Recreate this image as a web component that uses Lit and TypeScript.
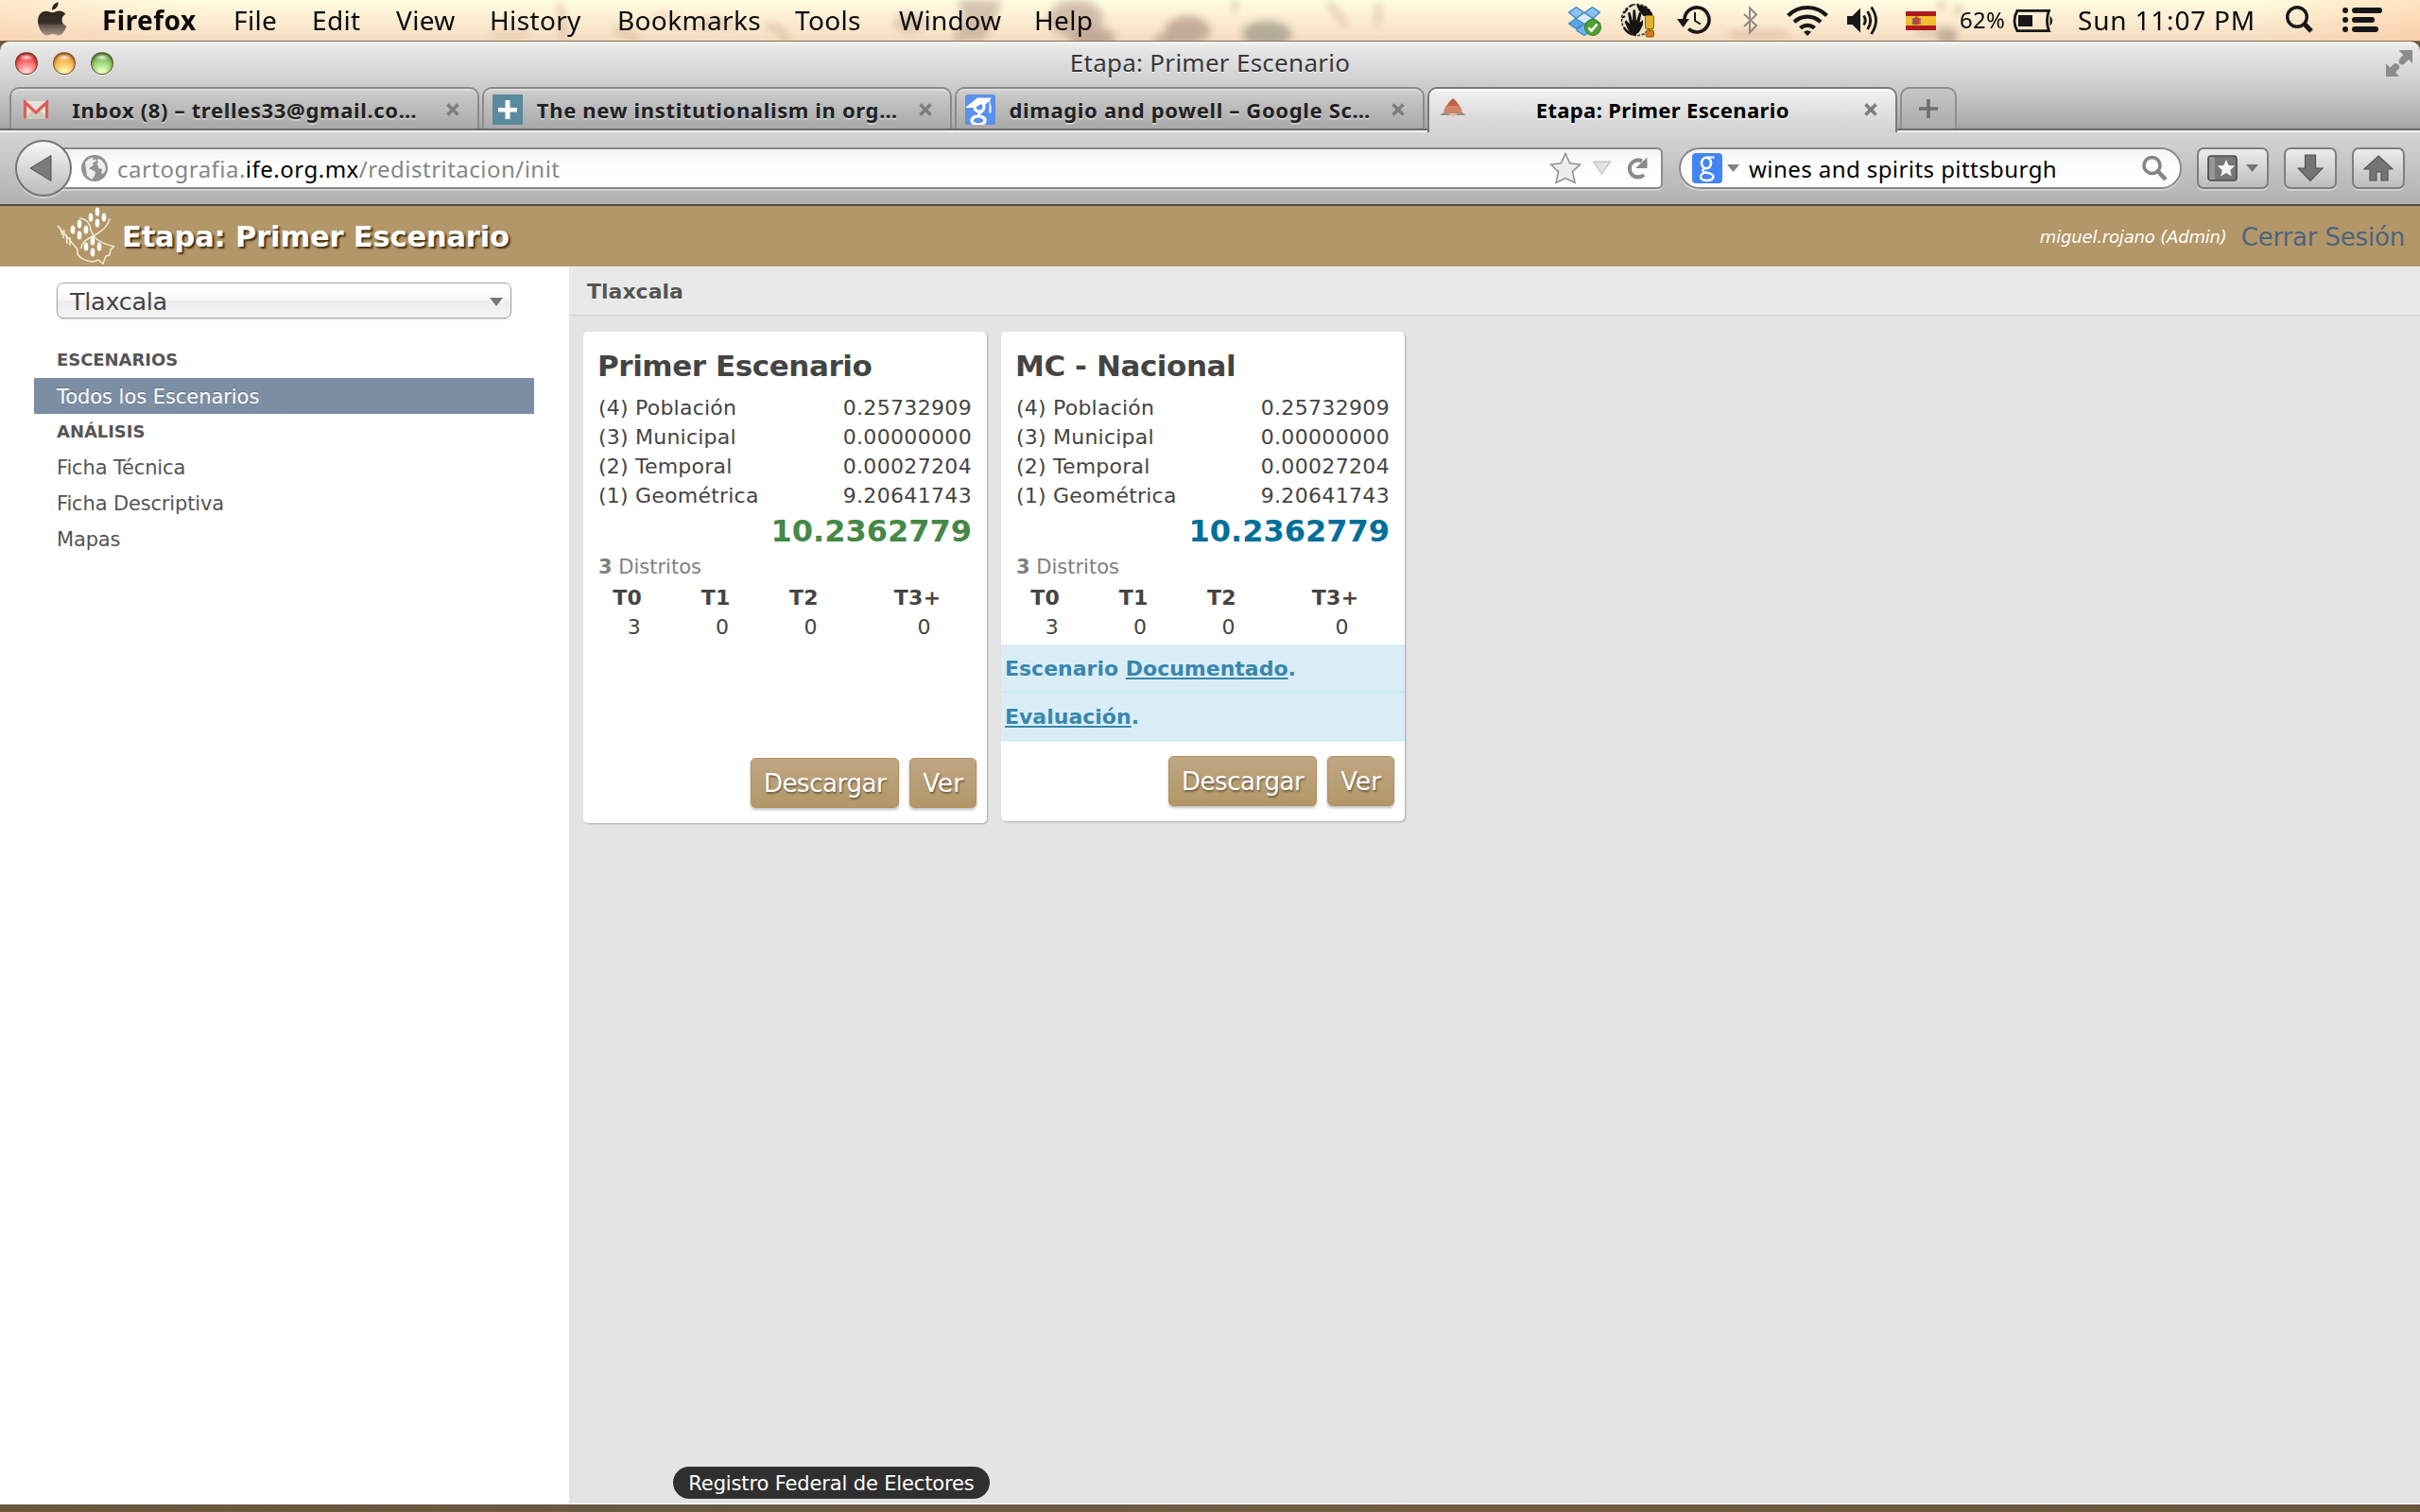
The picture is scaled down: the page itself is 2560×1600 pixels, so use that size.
import { LitElement, html, css, svg, nothing } from "lit";
import { customElement, property } from "lit/decorators.js";
import { classMap } from "lit/directives/class-map.js";

/* ---------- macOS menu bar ---------- */

@customElement("mac-menubar")
class MacMenubar extends LitElement {
  static styles = css`
    :host { display: block; height: 44px; flex: none; }
    .bar {
      display: grid;
      grid-template-columns: 108px 1548px 1fr;
      height: 44px;
      box-sizing: border-box;
      border-bottom: 1px solid #85694c;
      background: linear-gradient(90deg, rgba(255, 200, 160, 0.35), rgba(255, 220, 190, 0) 8%, rgba(255, 220, 190, 0) 93%, rgba(255, 190, 140, 0.4)),
        linear-gradient(#fffde2, #fdeed3 45%, #f3dcc1);
      font: 28px/42px "Noto Sans", sans-serif;
      letter-spacing: 0.35px;
      color: #0a0a0a;
      overflow: hidden;
      position: relative;
    }
    .wallpaper { position: absolute; left: 0; top: 0; }
    .apple, .menus, .status { position: relative; }
    svg { display: block; }
    .menus { display: grid; grid-template-columns: 139px 83px 89px 99px 135px 188px 110px 143px 90px; align-content: start; white-space: nowrap; }
    .app { font-weight: 700; letter-spacing: 0.47px; }
    .status { display: grid; grid-template-columns: 56px 60px 70px 46px 62px 64px 58px 55px 70px 219px 60px 1fr; align-content: start; white-space: nowrap; }
    .percent { font-size: 24px; letter-spacing: 0.3px; padding-left: 1px; }
    .clock { letter-spacing: 0.8px; padding-left: 1px; }
  `;

  private icon(x: number, w: number, body: unknown) {
    return html`<svg width=${w} height="43" viewBox="${x} 0 ${w} 43">${body}</svg>`;
  }

  render() {
    const menus = ["File", "Edit", "View", "History", "Bookmarks", "Tools", "Window", "Help"];
    return html`
      <div class="bar">
        <svg class="wallpaper" width="2560" height="43">
          <defs><filter id="soft" x="-30%" y="-50%" width="160%" height="200%"><feGaussianBlur stdDeviation="4.500" /></filter></defs>
          <g filter="url(#soft)" fill="#a58a7c" opacity=".62">
            <ellipse cx="962" cy="24" rx="17" ry="10" opacity=".55" />
            <path d="M1012 0h48l-8 20 -12 23h-34l14-22z" opacity=".75" />
            <ellipse cx="1138" cy="20" rx="29" ry="20" opacity=".8" />
            <ellipse cx="1156" cy="40" rx="24" ry="11" />
            <ellipse cx="1256" cy="32" rx="24" ry="15" />
            <ellipse cx="1340" cy="36" rx="26" ry="14" fill="#8d8a7d" />
            <ellipse cx="1238" cy="42" rx="18" ry="6" />
            <ellipse cx="2060" cy="38" rx="11" ry="9" />
            <ellipse cx="2040" cy="32" rx="14" ry="6" opacity=".4" />
          </g>
          <g filter="url(#soft)" stroke="#b98b73" fill="none" stroke-width="5" opacity=".5">
            <path d="M1306 0v12M1404 2l20 24M1458 4v22M590 4q10 20 4 38M650 30q20 6 24 13M740 28q14-10 34 0M812 26q18 6 20 18M1830 36h60M2054 0v12M2072 4v12" />
            <path d="M520 36h40M690 18q20-6 30 8" opacity=".6" />
          </g>
        </svg>
        <div class="apple">
          ${this.icon(0, 107, svg`
            <defs><linearGradient id="ap" x1="0" y1="0" x2="0" y2="1"><stop offset="0" stop-color="#2d2620"/><stop offset=".52" stop-color="#3a3029"/><stop offset=".56" stop-color="#5d5048"/><stop offset="1" stop-color="#a69483"/></linearGradient></defs>
            <path fill="#2b2621" d="M55 10.500c-.3-4.500 3-7.800 6.600-8.300 .4 4.200-2.700 8-6.600 8.300z"/>
            <path fill="url(#ap)" d="M55.500 13.200c2.300 0 4.300-1.700 7.500-1.700 2.800 0 4.900 1.300 6.300 3.300-5.500 3.300-4.700 10.700 1 12.900-1.700 4.800-4.700 9.800-8.200 9.800-2.400 0-3.500-1.400-6.400-1.400s-4 1.400-6.300 1.400c-4.300 0-9.400-8.300-9.400-15.200 0-6.800 4.300-10.600 8.600-10.600 3 0 5 1.500 6.900 1.500z"/>`)}
        </div>
        <nav class="menus"><span class="app">Firefox</span>${menus.map((m) => html`<span>${m}</span>`)}</nav>
        <div class="status">
          ${this.icon(1656, 56, svg`
            <g stroke="#3d85c4" stroke-width="1.200" stroke-linejoin="round">
              <path fill="#8ac2ee" d="M1667.500 7.500l8.500 6-9 6-7.500-6.500zM1684.500 7.500l-8.500 6 9 6 7.500-6.500z"/>
              <path fill="#5aa5e4" d="M1667 19.500l-7.500 5.500 8 5.500 8.500-5.500zM1685 19.500l7.500 5.500-8 5.500-8.500-5.500z"/>
              <path fill="#d8ebfa" d="M1676 13.500l9 6-9 6-9-6z"/>
              <path fill="#6fb3ea" d="M1668 31l8-5.500 8 5.500v1.500l-8 5-8-5z"/>
            </g>
            <circle cx="1685" cy="29" r="8.500" fill="#4fa02f" stroke="#2f7a1a"/>
            <path d="M1680.500 29.500l3 3 6-7" fill="none" stroke="#fff" stroke-width="2.600"/>`)}
          ${this.icon(1712, 60, svg`
            <circle cx="1732" cy="21" r="16.500" fill="#ece2c8" stroke="#3a3630" stroke-width="1.600" stroke-dasharray="3 1.500"/>
            <path fill="#151412" d="M1731 5c9 0 16 5 17.500 12h-10l-5-6z"/>
            <path fill="#151412" d="M1718.500 23l2-1.500 3.500 4-2-12 2.500-.5 2.500 9.500.5-12h2.500l1 12 3-9.500 2.500.5-2 10.500 3.500-3v5l-4 8c-5 4-9 3-11-1z"/>
            <path d="M1718 14l4-5M1724 7l3-2M1716 19l3-2" stroke="#151412" stroke-width="2" fill="none"/>
            <path d="M1718 29q4 8 13 7.500" stroke="#151412" stroke-width="2.500" fill="none"/>
            <rect x="1740.500" y="16.500" width="9" height="14" rx="1.500" fill="#dfb22a" stroke="#8d6210"/>
            <rect x="1741" y="32" width="8.500" height="7" rx="1.500" fill="#d17f1b" stroke="#8c4f0e"/>`)}
          ${this.icon(1772, 70, svg`
            <path d="M1782 21.500a13 13 0 1 1 4.200 9" fill="none" stroke="#171717" stroke-width="3.600"/>
            <path d="M1774 20h13l-6.500 9z" fill="#171717"/>
            <path d="M1793 13v9l6 3.500" fill="none" stroke="#171717" stroke-width="2"/>`)}
          ${this.icon(1842, 46, svg`<path d="M1845 15l13 12-7 7.500v-26l7 7-13 12.500" fill="none" stroke="#8f8a82" stroke-width="2"/>`)}
          ${this.icon(1888, 62, svg`
            <g fill="none" stroke="#171717" stroke-width="4.200">
              <path d="M1891.500 16.500a29 29 0 0 1 41 0"/><path d="M1898 23.300a20 20 0 0 1 28 0"/><path d="M1904.500 29.800a11 11 0 0 1 15 0"/>
            </g><path d="M1912 38l-4-4.300a6 6 0 0 1 8 0z" fill="#171717"/>`)}
          ${this.icon(1950, 64, svg`
            <path d="M1954 17h5.500l8.500-8.500v26l-8.500-8.500h-5.500z" fill="#171717"/>
            <g fill="none" stroke="#171717" stroke-width="2.800"><path d="M1971.500 16.500q3.500 5 0 10"/><path d="M1975.500 12q6.500 9.500 0 19"/><path d="M1979.500 7.500q10 14 0 28.500"/></g>`)}
          ${this.icon(2014, 58, svg`
            <rect x="2016" y="12" width="32" height="20" fill="#ad1a1f"/><rect x="2016" y="17" width="32" height="10" fill="#f3bd2b"/>
            <rect x="2024" y="19" width="6.500" height="7" rx="1" fill="#b9443a"/><path d="M2023.500 19v7M2031 19v7" stroke="#77707c" stroke-width="1.400"/><rect x="2026" y="17.500" width="2.600" height="2" fill="#b3541e"/>`)}
          <span class="percent">62%</span>
          ${this.icon(2127, 70, svg`
            <path d="M2134 11.300h33.500q-4 10.700 0 21.400h-33.500q-6-10.700 0-21.400z" fill="none" stroke="#171717" stroke-width="2.800"/>
            <rect x="2135" y="16" width="15" height="12" fill="#171717"/><path d="M2168.500 16.500q5.500 5.500 0 11z" fill="#171717"/>`)}
          <span class="clock">Sun 11:07 PM</span>
          ${this.icon(2416, 60, svg`<circle cx="2430" cy="18" r="10.300" fill="none" stroke="#171717" stroke-width="3.400"/><path d="M2437 24.500l8 8.500" stroke="#171717" stroke-width="5"/>`)}
          ${this.icon(2476, 84, svg`<g stroke="#171717" stroke-width="6" stroke-linecap="round"><path d="M2481 11h.01M2481 21h.01M2481 31h.01M2491 11h26M2491 21h18M2491 31h22"/></g>`)}
        </div>
      </div>`;
  }
}

/* ---------- Firefox window chrome ---------- */

type Tab = { title: string; icon: unknown; active?: boolean };

const TABS: Tab[] = [
  {
    title: "Inbox (8) – trelles33@gmail.co…",
    icon: svg`<rect x="4" y="7" width="26" height="18.500" fill="#e6e3da"/><path d="M4 25.500l9-9h8l9 9z" fill="#cfcbbd"/><path d="M13 16.500L17 13l4 3.500-4 3.500z" fill="#f3f1ea"/><path d="M5.500 25.500V8.500L17 19 28.500 8.500v17" fill="none" stroke="#dd5f56" stroke-width="3.200"/>`,
  },
  {
    title: "The new institutionalism in org…",
    icon: svg`<rect width="32" height="32" fill="#5a8b9c"/><path d="M13.500 6h5v8h7.500v4.500h-7.500V26h-5v-7.500H6V14h7.500z" fill="#fff"/>`,
  },
  {
    title: "dimagio and powell – Google Sc…",
    icon: svg`<rect width="32" height="32" rx="3" fill="#5b90ec"/><path d="M0 14L13 3.500h15l-2.500 3v13l2 0v-7l-1-3V6L20 12l-3-2-7 4z" fill="#fff"/><ellipse cx="15" cy="13" rx="5" ry="5.200" fill="none" stroke="#fff" stroke-width="3.200"/><path d="M18 18q-5 2-2.500 4" stroke="#fff" stroke-width="3" fill="none"/><ellipse cx="14" cy="27.500" rx="7" ry="4.600" fill="none" stroke="#fff" stroke-width="3.400"/>`,
  },
  {
    title: "Etapa: Primer Escenario",
    active: true,
    icon: svg`<path d="M2 22l4-3h20l4 3z" fill="#8f908c"/><path d="M16 4l4 4 4 5 2 5-4 2-6 1-6-1-4-2 2-5 4-5z" fill="#cf8467"/><path d="M16 4l4 4 2 4h-12l2-4z" fill="#bb6542"/><path d="M11 20h10l-5 4z" fill="#e6b9a5"/>`,
  },
];

@customElement("browser-chrome")
class BrowserChrome extends LitElement {
  static styles = css`
    :host { display: block; flex: none; font-family: "Noto Sans", sans-serif; white-space: nowrap; }
    svg { display: block; flex: none; }
    .top {
      background: linear-gradient(#f4f4f4 0, #e9e9e9 4px, #c9c9c9 55%, #adadad 90%, #a0a0a0);
      border-radius: 10px 10px 0 0;
      border-top: 1px solid #fff;
      box-sizing: border-box;
      height: 94px;
    }
    .title { display: grid; grid-template-columns: 200px 1fr 200px; align-items: center; height: 47px; box-sizing: border-box; padding-bottom: 4px; }
    .lights { display: flex; gap: 16px; padding-left: 16px; }
    .light { width: 24px; height: 24px; border-radius: 50%; box-sizing: border-box; border: 1px solid rgba(70, 30, 20, 0.65); box-shadow: 0 1px 1px rgba(255, 255, 255, 0.7), inset 0 2px 3px rgba(60, 10, 0, 0.45); }
    .red { background: radial-gradient(ellipse 9px 4px at 50% 20%, rgba(255, 255, 255, 0.8), transparent), radial-gradient(circle at 50% 95%, #ffd0cd 10%, #f4524e 62%, #c92f2d); }
    .amber { background: radial-gradient(ellipse 9px 4px at 50% 20%, rgba(255, 255, 255, 0.8), transparent), radial-gradient(circle at 50% 95%, #fff3a5 10%, #f4ae48 62%, #cc7b1f); }
    .green { background: radial-gradient(ellipse 9px 4px at 50% 20%, rgba(255, 255, 255, 0.8), transparent), radial-gradient(circle at 50% 95%, #e6ffc0 10%, #82c560 62%, #4a8f36); }
    .name { text-align: center; font-size: 26px; line-height: 36px; padding-bottom: 2px; letter-spacing: 0.27px; color: #383838; text-shadow: 0 1px 0 rgba(255, 255, 255, 0.6); }
    .expand { justify-self: end; padding-right: 7px; }
    .strip { display: flex; height: 46px; box-sizing: border-box; padding-left: 10px; gap: 3.500px; border-bottom: 2px solid #6d6d6d; }
    .tab {
      display: flex; align-items: center; width: 496.500px; height: 44px; box-sizing: border-box; flex: none;
      padding: 2px 19px 0 9px;
      border: 2px solid #8b8b8b; border-bottom: 0; border-radius: 10px 10px 0 0;
      background: linear-gradient(#cfcfcf, #bebebe 40%, #a9a9a9);
      box-shadow: inset 0 2px 1px rgba(255, 255, 255, 0.3);
      color: #222; font-size: 22px; font-weight: 700; letter-spacing: 0.66px;
      text-shadow: 0 2px 0 rgba(255, 255, 255, 0.4);
    }
    .tab.active {
      height: 48px; padding-bottom: 4px; background: linear-gradient(#f2f2f2, #e4e4e4 40%, #d3d3d3); color: #000; letter-spacing: 0.36px;
      box-shadow: inset 0 2px 0 #fff; border-color: #7a7a7a; z-index: 1;
    }
    .label { flex: 1; text-align: center; padding-right: 7px; }
    .new { width: 60px; height: 44px; box-sizing: border-box; border: 2px solid #8f8f8f; border-bottom: 0; border-radius: 10px 10px 0 0; display: flex; justify-content: center; align-items: center; background: linear-gradient(#c6c6c6, #ababab); }
    .tools {
      display: flex; align-items: center; height: 80px; box-sizing: border-box;
      padding: 0 16px 0 16px; border-top: 2px solid #f0f0f0; border-bottom: 2px solid #4c4c4c;
      background: linear-gradient(#d5d5d5, #b1b1b1);
      font-size: 24px;
    }
    .back { width: 60px; height: 60px; border-radius: 50%; box-sizing: border-box; border: 2px solid #757575; background: linear-gradient(#f6f6f6, #bcbcbc); margin-right: -30px; display: grid; place-items: center; z-index: 1; box-shadow: 0 2px 0 rgba(255, 255, 255, 0.4); }
    .field { height: 44px; box-sizing: border-box; border: 2px solid #8a8a8a; display: flex; align-items: center; background: linear-gradient(#f4f4f4, #fdfdfd 40%, #fff); box-shadow: 0 2px 0 rgba(255, 255, 255, 0.35); }
    .url { width: 1713px; border-radius: 0 6px 6px 0; padding: 0 12px 0 38px; color: #868686; letter-spacing: 0.48px; }
    .url b { font-weight: 400; color: #000; letter-spacing: 0.5px; }
    .address { flex: 1; padding-left: 10px; }
    .search { width: 532px; border-radius: 22px; margin: 0 16px 0 17px; padding: 0 13px 0 12px; color: #000; letter-spacing: 0.43px; }
    .query { flex: 1; padding-left: 10px; }
    .btn { width: 56px; height: 44px; box-sizing: border-box; border: 2px solid #7f7f7f; border-radius: 7px; background: linear-gradient(#ececec, #bdbdbd); display: flex; align-items: center; justify-content: center; margin-left: 16px; box-shadow: 0 2px 0 rgba(255, 255, 255, 0.35); }
    .btn.wide { width: 76px; margin-left: 0; gap: 9px; }
    .g { width: 32px; height: 32px; border-radius: 4px; background: #4285f4; margin-right: 5px; flex: none; }
  `;

  render() {
    return html`
      <div class="top">
        <div class="title">
          <div class="lights"><i class="light red"></i><i class="light amber"></i><i class="light green"></i></div>
          <div class="name">Etapa: Primer Escenario</div>
          <svg class="expand" width="30" height="30" viewBox="0 0 30 30"><g fill="#8d8d8d"><path d="M14.500 1H29v14l-4-4-5 5q-3 1-4.500-.500T15 11l4-5z"/><path d="M1 15v14h14l-4-4.500 4-4q1-2.500-.5-4T10 15l-4.500 4.500z"/></g></svg>
        </div>
        <div class="strip">
          ${TABS.map((t) => html`
            <div class=${classMap({ tab: true, active: !!t.active })}>
              <svg width="32" height="32" viewBox="0 0 32 32">${t.icon}</svg>
              <span class="label">${t.title}</span>
              <svg width="14" height="14" viewBox="0 0 14 14"><path d="M1.500 1.500l11 11M12.500 1.500l-11 11" stroke="#7f7f7f" stroke-width="3.600"/></svg>
            </div>`)}
          <div class="new"><svg width="20" height="20" viewBox="0 0 20 20"><path d="M10 0v20M0 10h20" stroke="#6f6f6f" stroke-width="3.600"/></svg></div>
        </div>
      </div>
      <div class="tools">
        <div class="back"><svg width="30" height="30" viewBox="0 0 30 30"><path d="M1 15L23 1.500v27z" fill="#7b7b7b" stroke="#555"/></svg></div>
        <div class="field url">
          <svg width="28" height="28" viewBox="0 0 28 28"><circle cx="14" cy="14" r="14" fill="#929292"/><path fill="#ededed" d="M4 8l4-4 5-1.500-1 3 3-1 1 2-4 2 1 2-4 3-1 3-3 0zM17 4l4 1 4 5 1 6-3 4-2-1 1-4-4-1 0-3-2-1 2-2-1-2zM5 15l5 0 5 3-1 4-3 4-5-4z"/></svg>
          <span class="address">cartografia.<b>ife.org.mx</b>/redistritacion/init</span>
          <svg width="106" height="34" viewBox="0 0 106 34">
            <path d="M17 1.500l4.700 10.300 10.800 1.200-8 7.600 2.600 11.800L17 27.500 7 32.400l2.500-11.800-8-7.600 10.800-1.200z" fill="#ececec" stroke="#8d8d8d" stroke-width="1.500"/>
            <path d="M46.500 10h18L55.500 23.500z" fill="#e2e2e2" stroke="#b4b4b4"/>
            <path d="M100 24a9 9 0 1 1-2-14.500" fill="none" stroke="#8b8b8b" stroke-width="4.200"/><path d="M103.500 5.500v11.500H91z" fill="#8b8b8b"/>
          </svg>
        </div>
        <div class="field search">
          <svg class="g" viewBox="0 0 32 32"><g fill="none" stroke="#fff"><ellipse cx="15" cy="10.500" rx="5" ry="5.800" stroke-width="2.600"/><path d="M15 4.500h8.500" stroke-width="1.800"/><path d="M13 16q-4 3 1 4.500 8 1 8.500 4.500-.5 4-7 4-6.500-.3-6.500-4 .5-3.500 5-4.500" stroke-width="2.300"/></g></svg>
          <svg width="13" height="8" viewBox="0 0 13 8"><path d="M0 0h13L6.500 8z" fill="#808080"/></svg>
          <span class="query">wines and spirits pittsburgh</span>
          <svg width="28" height="28" viewBox="0 0 28 28"><circle cx="11.500" cy="11" r="8.500" fill="none" stroke="#858585" stroke-width="3.600"/><path d="M18 17.500l8 8.500" stroke="#858585" stroke-width="4.600"/></svg>
        </div>
        <div class="btn wide">
          <svg width="32" height="28" viewBox="0 0 32 28"><rect x="1" y="1" width="30" height="26" rx="3" fill="#777" stroke="#4c4c4c" stroke-width="1.600"/><path d="M2 2h6v24H2z" fill="#979797"/><path d="M20 5l2.700 6 6.500.6-5 4.300 1.600 6.600L20 19l-5.800 3.500 1.600-6.600-5-4.300 6.500-.6z" fill="#f5f5f5"/></svg>
          <svg width="13" height="8" viewBox="0 0 13 8"><path d="M0 0h13L6.500 8z" fill="#757575"/></svg>
        </div>
        <div class="btn"><svg width="28" height="30" viewBox="0 0 28 30"><path d="M8.500 1h11v14H27L14 28.500 1 15h7.500z" fill="#757575" stroke="#555" stroke-width="1.200"/></svg></div>
        <div class="btn"><svg width="32" height="28" viewBox="0 0 32 28"><path d="M16 1l15 14h-5v12h-7v-9h-5v9H7V15H1z" fill="#757575" stroke="#555" stroke-width="1.200"/></svg></div>
      </div>`;
  }
}

/* ---------- Scenario card ---------- */

type Scenario = {
  name: string;
  tone: "green" | "blue";
  scores: [string, string][];
  total: string;
  districts: number;
  counts: [string, number][];
  documented: boolean;
};

const SCORES: [string, string][] = [
  ["(4) Población", "0.25732909"],
  ["(3) Municipal", "0.00000000"],
  ["(2) Temporal", "0.00027204"],
  ["(1) Geométrica", "9.20641743"],
];
const COUNTS: [string, number][] = [["T0", 3], ["T1", 0], ["T2", 0], ["T3+", 0]];

const SCENARIOS: Scenario[] = [
  { name: "Primer Escenario", tone: "green", scores: SCORES, total: "10.2362779", districts: 3, counts: COUNTS, documented: false },
  { name: "MC - Nacional", tone: "blue", scores: SCORES, total: "10.2362779", districts: 3, counts: COUNTS, documented: true },
];

@customElement("scenario-card")
class ScenarioCard extends LitElement {
  @property({ attribute: false }) data!: Scenario;

  static styles = css`
    :host { display: block; }
    .card {
      display: flex; flex-direction: column; width: 427px; height: 520px; box-sizing: border-box;
      background: #fff; border-radius: 5px; box-shadow: 1px 1px 2px rgba(0, 0, 0, 0.25);
      padding-top: 16px; font: 22px/31px "DejaVu Sans", sans-serif; color: #444; white-space: nowrap;
    }
    .card.documented { height: 518px; }
    h2 { margin: 0 0 9px; padding-left: 15px; font-size: 31px; line-height: 40px; letter-spacing: -0.43px; }
    .row { display: flex; justify-content: space-between; padding: 0 16px 0 16px; letter-spacing: 0.22px; }
    .row .value { letter-spacing: 0.34px; }
    .total { padding-right: 16px; text-align: right; font-size: 32px; font-weight: 700; line-height: 44px; }
    .green { color: #468847; }
    .blue { color: #006f9a; }
    .districts { padding-left: 16px; color: #808080; font-size: 21px; line-height: 32px; }
    .counts { display: grid; grid-template-columns: 93.400px 93.400px 93.400px 1fr; text-align: center; padding-top: 1px; padding-bottom: 3px; }
    .counts b { letter-spacing: 0.3px; }
    .count { padding-left: 14px; }
    .note { height: 51px; box-sizing: border-box; border-bottom: 1px solid #bce8f1; background: #d9edf7; color: #3a87ad; font-weight: 700; line-height: 52px; padding-left: 4px; }
    .note u { text-decoration-thickness: 2px; text-underline-offset: 2px; text-decoration-skip-ink: none; }
    .actions { margin-top: auto; display: flex; justify-content: flex-end; gap: 11px; padding: 0 11px 16px 0; }
    .action {
      height: 53px; box-sizing: border-box; padding: 0 13px 0 13px; border: 1px solid #b1935f; border-radius: 5px;
      background: linear-gradient(#bfa785, #b39766); color: #fff; font-size: 26px; line-height: 53px; letter-spacing: -0.43px;
      text-shadow: 1px 2px 2px rgba(0, 0, 0, 0.4); box-shadow: 0 2px 3px rgba(0, 0, 0, 0.25);
    }
    .view { letter-spacing: 0.1px; }
  `;

  render() {
    const d = this.data;
    return html`
      <article class=${classMap({ card: true, documented: d.documented })}>
        <h2>${d.name}</h2>
        ${d.scores.map(([k, v]) => html`<div class="row"><span>${k}</span><span class="value">${v}</span></div>`)}
        <div class="total ${d.tone}">${d.total}</div>
        <div class="districts"><b>${d.districts}</b> Distritos</div>
        <div class="counts">
          ${d.counts.map(([k]) => html`<b>${k}</b>`)}
          ${d.counts.map(([, n]) => html`<span class="count">${n}</span>`)}
        </div>
        ${d.documented
          ? html`<div class="note">Escenario <u>Documentado</u>.</div><div class="note"><u>Evaluación</u>.</div>`
          : nothing}
        <div class="actions"><span class="action">Descargar</span><span class="action view">Ver</span></div>
      </article>`;
  }
}

/* ---------- Page ---------- */

@customElement("app-root")
class AppRoot extends LitElement {
  static styles = css`
    :host { display: flex; flex-direction: column; width: 2560px; height: 1600px; overflow: hidden; position: relative; background: linear-gradient(90deg, #6d573d, #6a5a44 30%, #725a42 60%, #6a563f); font-family: "DejaVu Sans", sans-serif; white-space: nowrap; }
    .header { flex: none; height: 64px; background: #b39768; display: flex; align-items: center; padding: 0 16px 0 60px; }
    .logo { flex: none; display: block; }
    .stage { flex: 1; padding: 2px 0 0 5px; margin: 0; font-size: 30.500px; line-height: 62px; letter-spacing: -0.17px; color: #fff; text-shadow: 2px 2px 2px rgba(40, 25, 0, 0.85); }
    .user { font-size: 18px; font-style: italic; letter-spacing: -0.17px; color: #fff; padding-right: 15px; padding-top: 1px; }
    .logout { font-size: 26px; letter-spacing: -0.18px; color: #4c6480; padding-top: 2px; }
    .body { flex: none; display: flex; height: 1309px; border-bottom: 1px solid #fff; background: #fff; }
    .side { width: 602px; flex: none; padding-top: 17px; box-sizing: border-box; }
    .select { margin-left: 60px; width: 481px; height: 38px; box-sizing: border-box; border: 1px solid #a6a6a6; border-radius: 7px; display: flex; align-items: center; justify-content: space-between; padding: 2px 8px 0 13px; font-size: 25.500px; letter-spacing: -0.3px; color: #444; background: linear-gradient(#fff 20%, #f6f6f6 50%, #eee 52%, #f4f4f4); box-shadow: 0 1px 2px rgba(0, 0, 0, 0.15); }
    .nav { margin-top: 25px; font-size: 21px; line-height: 38px; letter-spacing: -0.15px; color: #555; }
    .nav div { margin: 0 37px 0 36px; padding-left: 24px; height: 38px; }
    .nav .group { font-size: 18px; font-weight: 700; letter-spacing: -0.05px; line-height: 38px; }
    .nav .current { background: #7c8ea4; color: #fff; line-height: 40px; letter-spacing: -0.05px; text-shadow: 0 -1px 0 rgba(0, 0, 0, 0.2); }
    .main { flex: 1; background: #e4e4e4; border-top: 1px solid #f6f6f6; }
    .crumb { height: 51px; box-sizing: border-box; border-bottom: 1px solid #cdcdcd; background: #e9e9e9; padding-left: 19px; font-size: 22px; font-weight: 700; line-height: 52px; color: #555; text-shadow: 0 1px 0 #fff; }
    .cards { display: flex; align-items: flex-start; gap: 15px; padding: 17px 15px; }
    .status { position: absolute; left: 712px; top: 1552px; width: 335px; height: 34px; border-radius: 17px; background: #2f2f2f; color: #fff; font-size: 21px; letter-spacing: -0.14px; line-height: 36px; text-align: center; box-sizing: border-box; }
  `;

  private leaf(x: number, y: number) {
    return svg`<ellipse cx=${x} cy=${y} rx="2.300" ry="4.600"/>`;
  }

  render() {
    const leaves = [[43, 5], [36, 11], [50, 11], [43, 17], [24, 18], [17, 24], [31, 24], [24, 30], [38, 36], [31, 42], [45, 42], [38, 48]];
    return html`
      <mac-menubar></mac-menubar>
      <browser-chrome></browser-chrome>
      <header class="header">
        <svg class="logo" width="64" height="62" viewBox="0 0 64 62">
          <g fill="#fff">${leaves.map(([x, y]) => this.leaf(x, y))}</g>
          <g fill="none" stroke="#f3ead8" stroke-width="1.500">
            <path d="M56 12c-2 9-8 13-16 18-8 4-14 7-14 14"/>
            <path d="M24 12c9 1 11 6 12 12 2 8 8 14 25 18"/>
            <path d="M1 20c7 8 13 15 21 25M4 23l2 7M8 24l-1 9M10 29l1 10M14 32v9"/>
            <path d="M22 45v5c4 6 10 7 16 8l6-2 5 4 3-8 4-1 1-6 4-3"/>
          </g>
        </svg>
        <h1 class="stage">Etapa: Primer Escenario</h1>
        <span class="user">miguel.rojano (Admin)</span>
        <span class="logout">Cerrar Sesión</span>
      </header>
      <div class="body">
        <aside class="side">
          <div class="select">
            <span>Tlaxcala</span>
            <svg width="14" height="9" viewBox="0 0 14 9"><path d="M0 0h14L7 9z" fill="#777" /></svg>
          </div>
          <nav class="nav">
            <div class="group">ESCENARIOS</div>
            <div class="current">Todos los Escenarios</div>
            <div class="group">ANÁLISIS</div>
            <div>Ficha Técnica</div>
            <div>Ficha Descriptiva</div>
            <div>Mapas</div>
          </nav>
        </aside>
        <main class="main">
          <div class="crumb">Tlaxcala</div>
          <div class="cards">${SCENARIOS.map((s) => html`<scenario-card .data=${s}></scenario-card>`)}</div>
        </main>
      </div>
      <div class="status">Registro Federal de Electores</div>`;
  }
}
